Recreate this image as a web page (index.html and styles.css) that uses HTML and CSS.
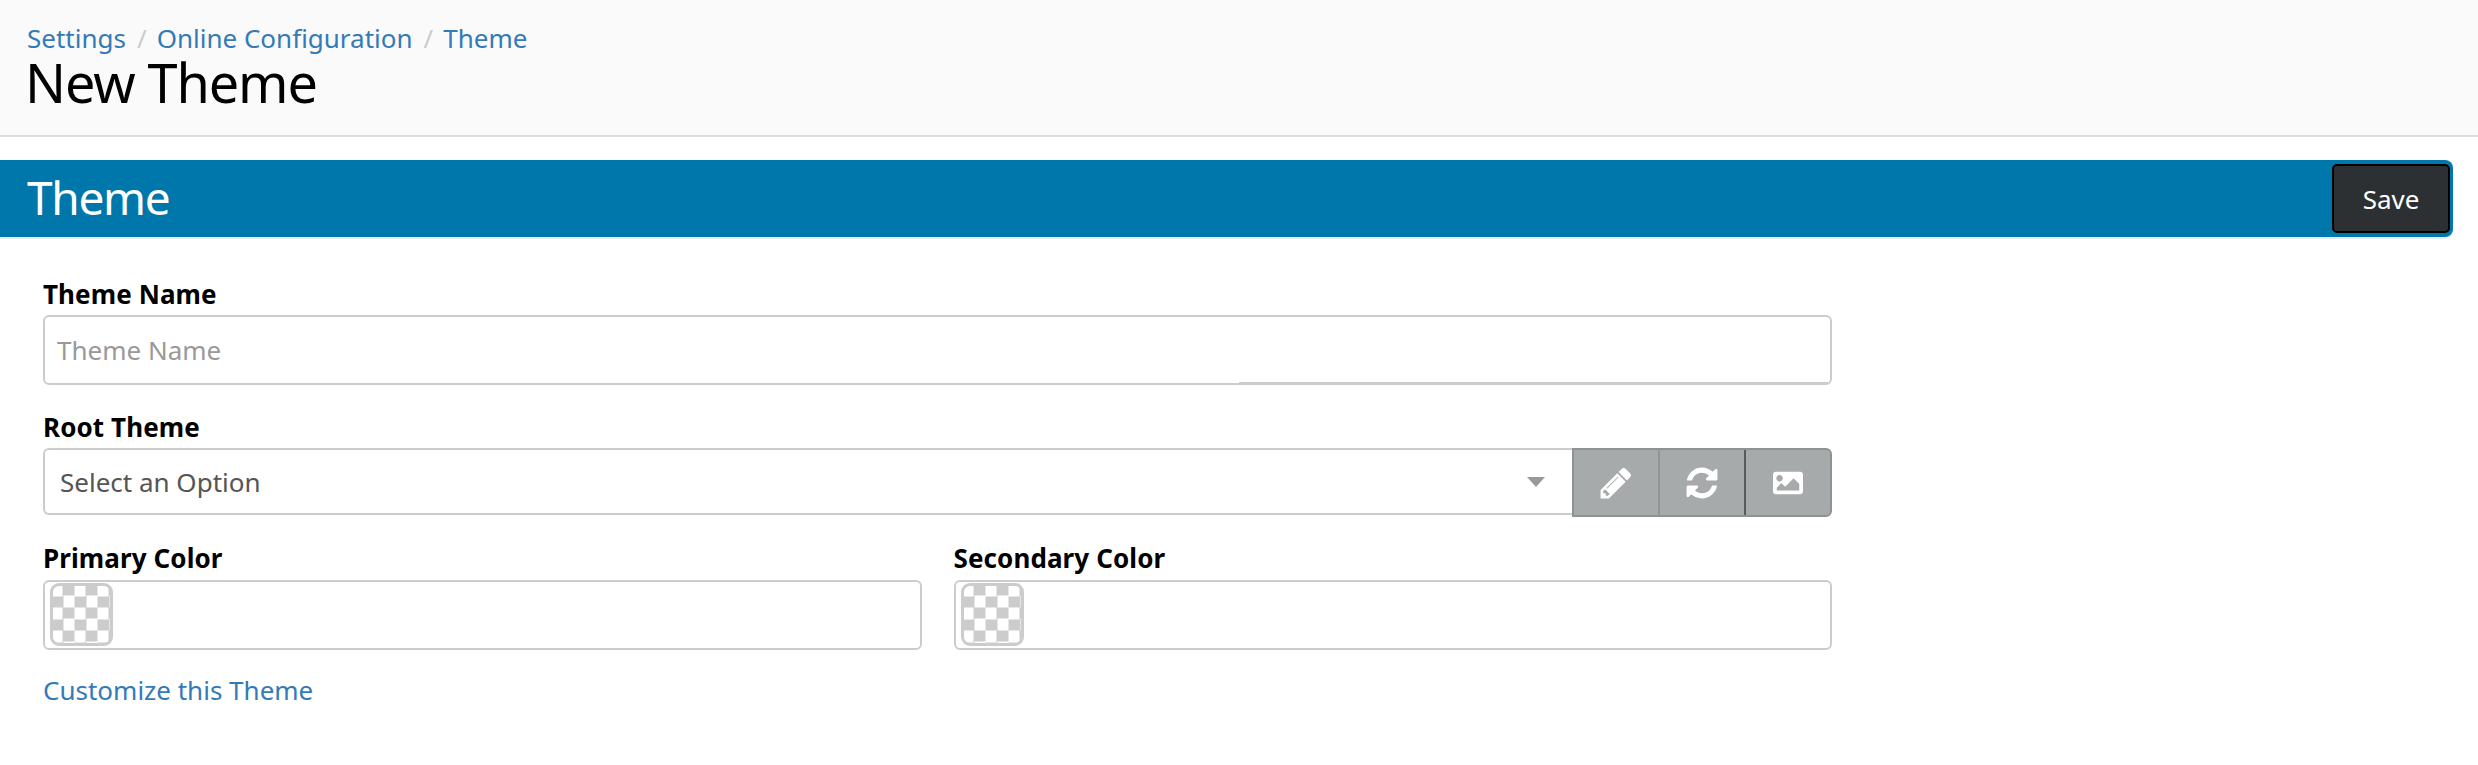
FILE: index.html
```html
<!DOCTYPE html>
<html lang="en">
<head>
<meta charset="utf-8">
<title>New Theme</title>
<link rel="stylesheet" href="styles.css">
</head>
<body>
<header class="page-header">
  <nav class="crumbs">
    <a href="#">Settings</a><span class="sep">/</span>
    <a href="#">Online Configuration</a><span class="sep">/</span>
    <a href="#">Theme</a>
  </nav>
  <h1 class="page-title">New Theme</h1>
</header>
<main class="panel">
  <div class="panel-bar">
    <h2 class="panel-title">Theme</h2>
    <button class="save" type="button">Save</button>
  </div>
  <form class="form">
    <div class="field">
      <label class="label">Theme Name</label>
      <div class="input-wrap">
        <input class="text-input" type="text" placeholder="Theme Name">
      </div>
    </div>
    <div class="field">
      <label class="label">Root Theme</label>
      <div class="picker">
        <div class="select">
          <span>Select an Option</span>
          <span class="caret"></span>
        </div>
        <div class="tools">
          <button class="tool tool-first" type="button">
            <svg class="icon" viewBox="0 0 1792 1792"><path d="M491 1536l91-91-235-235-91 91v107h128v128h107zm523-928q0-22-22-22-10 0-17 7l-542 542q-7 7-7 17 0 22 22 22 10 0 17-7l542-542q7-7 7-17zm-54-192l416 416-832 832h-416v-416zm683 96q0 53-37 90l-166 166-416-416 166-165q36-38 90-38 53 0 91 38l235 234q37 39 37 91z"/></svg>
          </button>
          <button class="tool tool-mid" type="button">
            <svg class="icon" viewBox="0 0 1792 1792"><path d="M1639 1056q0 5-1 7-64 268-268 434.5t-478 166.5q-146 0-282.500-55t-243.500-157l-129 129q-19 19-45 19t-45-19-19-45v-448q0-26 19-45t45-19h448q26 0 45 19t19 45-19 45l-137 137q71 66 161 102t187 36q134 0 250-65t186-179q11-17 53-117 8-23 30-23h192q13 0 22.500 9.500t9.500 22.500zm25-800v448q0 26-19 45t-45 19h-448q-26 0-45-19t-19-45 19-45l138-138q-148-137-349-137-134 0-250 65t-186 179q-11 17-53 117-8 23-30 23h-199q-13 0-22.500-9.500t-9.500-22.500v-7q65-268 270-434.500t480-166.500q146 0 284 55.500t245 156.500l130-129q19-19 45-19t45 19 19 45z"/></svg>
          </button>
          <button class="tool tool-last" type="button">
            <svg class="icon icon-wide" viewBox="0 0 512 512"><path d="M464 448H48c-26.51 0-48-21.49-48-48V112c0-26.51 21.49-48 48-48h416c26.51 0 48 21.49 48 48v288c0 26.51-21.49 48-48 48zM112 120c-30.928 0-56 25.072-56 56s25.072 56 56 56 56-25.072 56-56-25.072-56-56-56zM64 384h384V272l-87.515-87.515c-4.686-4.686-12.284-4.686-16.971 0L208 320l-55.515-55.515c-4.686-4.686-12.284-4.686-16.971 0L64 336v48z"/></svg>
          </button>
        </div>
      </div>
    </div>
    <div class="colors">
      <div class="color-field">
        <label class="label">Primary Color</label>
        <div class="color-box"><span class="swatch"></span></div>
      </div>
      <div class="color-field">
        <label class="label">Secondary Color</label>
        <div class="color-box"><span class="swatch"></span></div>
      </div>
    </div>
    <a class="customize" href="#">Customize this Theme</a>
  </form>
</main>
</body>
</html>
```
FILE: styles.css
```css
* { box-sizing: border-box; }
html, body { margin: 0; padding: 0; background: #fff; }
body { font-family: "Noto Sans", "Open Sans", sans-serif; font-size: 26px; color: #000; overflow: hidden; height: 765px; }
a { color: #337ab7; text-decoration: none; }
.page-header { height: 137px; background: #fafafa; border-bottom: 2px solid #ddd; padding: 21px 27px 0; }
.crumbs { display: flex; font-size: 26px; line-height: 34px; white-space: nowrap; }
.sep { color: #ccc; margin: 0 10px 0 11px; }
.page-title { margin: 0 0 0 -2px; font-size: 54px; line-height: 54px; font-weight: 400; letter-spacing: -1.1px; }
.panel { padding-top: 23px; }
.panel-bar { height: 77px; margin-right: 25px; background: #0077aa; border-radius: 0 8px 8px 0; box-shadow: 0 2px 0 #e9eef0; display: flex; align-items: center; justify-content: space-between; padding: 0 3px 0 27px; }
.panel-title { margin: -3px 0 0; color: #fff; font-size: 46px; font-weight: 400; line-height: 60px; letter-spacing: -1.3px; }
.save { width: 118px; height: 69px; background: #2c3033; color: #fff; border: 2px solid #000; border-radius: 5px; font: inherit; font-size: 26px; }
.form { width: 1832px; padding: 42px 0 0 43px; }
.field { margin-bottom: 27px; }
.field + .field { margin-bottom: 26px; }
.label { display: block; font-weight: 700; font-size: 26px; line-height: 30px; letter-spacing: 0.1px; margin-bottom: 6px; }
.input-wrap { position: relative; }
.input-wrap::after { content: ""; position: absolute; left: 1196px; right: 4px; bottom: 2px; height: 1px; background: #ccc; }
.text-input { display: block; width: 100%; height: 70px; padding: 0 12px; border: 2px solid #ccc; border-radius: 6px; font: inherit; font-size: 26px; color: #555; outline: none; }
.text-input::placeholder { color: #999; opacity: 1; }
.picker { display: flex; height: 69px; }
.select { flex: 1; display: flex; align-items: center; justify-content: space-between; height: 67px; padding: 0 27px 0 15px; border: 2px solid #ccc; border-right: 0; border-radius: 6px 0 0 6px; font-size: 26px; color: #555; }
.caret { width: 0; height: 0; border-left: 9px solid transparent; border-right: 9px solid transparent; border-top: 10px solid #999; }
.tools { display: flex; width: 260px; background: #a7aaaa; border: 2px solid #909393; border-radius: 0 6px 6px 0; }
.tool { display: flex; align-items: center; justify-content: center; padding: 0; background: none; border: 0; }
.tool-first { width: 86px; border-right: 2px solid #929595; }
.tool-mid { width: 86px; border-right: 2px solid #585b5b; }
.tool-last { flex: 1; }
.icon { width: 36px; height: 36px; fill: #fff; }
.icon-wide { width: 30px; height: 30px; }
.colors { display: grid; grid-template-columns: 1fr 1fr; gap: 32px; margin-bottom: 23px; }
.color-field .label { margin-bottom: 7px; }
.color-box { height: 70px; border: 2px solid #ccc; border-radius: 6px; padding: 1px 5px; }
.swatch { display: block; width: 63px; height: 63px; border: 3px solid #ccc; border-radius: 9px; background: repeating-conic-gradient(#ccc 0 25%, #fff 0 50%) -1.5px -1.5px / 23px 23px; }
.customize { display: block; font-size: 26px; line-height: 34px; }
```
